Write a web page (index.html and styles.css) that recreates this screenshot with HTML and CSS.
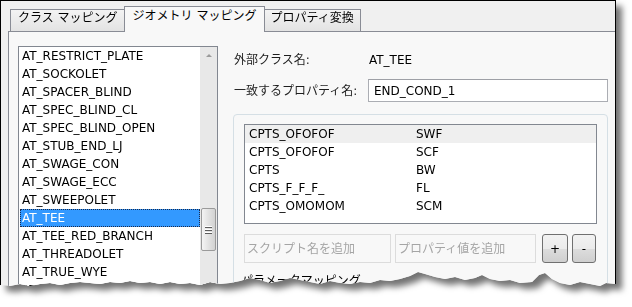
FILE: index.html
```html
<!DOCTYPE html>
<html>
    <head>
        <link rel="stylesheet" href="styles.css">
    </head>
    <body>
        <div class="frame">
        <div class="window">
            <div class="tabs">
                <div class="tab">クラス マッピング</div>
                <div class="tab active">ジオメトリ マッピング</div>
                <div class="tab">プロパティ変換</div>
            </div>
            <div class="panel">
                <div class="classlist">
                    <ul class="items">
                        <li>AT_RESTRICT_PLATE</li>
                        <li>AT_SOCKOLET</li>
                        <li>AT_SPACER_BLIND</li>
                        <li>AT_SPEC_BLIND_CL</li>
                        <li>AT_SPEC_BLIND_OPEN</li>
                        <li>AT_STUB_END_LJ</li>
                        <li>AT_SWAGE_CON</li>
                        <li>AT_SWAGE_ECC</li>
                        <li>AT_SWEEPOLET</li>
                        <li class="selected">AT_TEE</li>
                        <li>AT_TEE_RED_BRANCH</li>
                        <li>AT_THREADOLET</li>
                        <li>AT_TRUE_WYE</li>
                        <li>AT_UNION</li>
                    </ul>
                    <div class="scrollbar">
                        <div class="arrowbox"><span class="arrow"></span></div>
                        <div class="thumb"><i></i><i></i><i></i></div>
                    </div>
                </div>
                <div class="mapping">
                    <div class="fields">
                        <span class="label">外部クラス名:</span>
                        <span class="value">AT_TEE</span>
                        <span class="label">一致するプロパティ名:</span>
                        <input class="field" value="END_COND_1"/>
                    </div>
                    <div class="group">
                        <div class="table">
                            <div class="row hover"><span>CPTS_OFOFOF</span><span>SWF</span></div>
                            <div class="row"><span>CPTS_OFOFOF</span><span>SCF</span></div>
                            <div class="row"><span>CPTS</span><span>BW</span></div>
                            <div class="row"><span>CPTS_F_F_F_</span><span>FL</span></div>
                            <div class="row"><span>CPTS_OMOMOM</span><span>SCM</span></div>
                        </div>
                        <div class="addrow">
                            <input class="add script" placeholder="スクリプト名を追加"/>
                            <input class="add prop" placeholder="プロパティ値を追加"/>
                            <button class="plus">+</button>
                            <button class="minus">-</button>
                        </div>
                        <div class="section">パラメータマッピング</div>
                    </div>
                </div>
            </div>
        </div>
        </div>
    </body>
</html>
```

FILE: styles.css
```css
body{
    margin: 0;
    background: #fff;
    font-family: "DejaVu Sans", "Noto Sans CJK JP", sans-serif;
    font-size: 12px;
    color: #000;
}
.frame{
    width: 616px;
    filter: drop-shadow(6px 6px 3px rgba(0,0,0,0.55));
}
.window{
    width: 616px;
    height: 300px;
    box-sizing: border-box;
    border: 1px solid #000;
    border-bottom: none;
    background: #f0f0f0;
    overflow: hidden;
    clip-path: polygon(0 0, 616px 0, 616px 284px, 606px 283px, 600px 286px, 590px 284px, 580px 282px, 570px 285px, 560px 283px, 552px 279px, 545px 273px, 539px 275px, 532px 282px, 520px 283px, 510px 280px, 500px 281px, 490px 279px, 482px 275px, 475px 278px, 465px 280px, 455px 277px, 445px 279px, 435px 277px, 425px 274px, 418px 272px, 410px 276px, 400px 279px, 390px 281px, 380px 280px, 370px 283px, 360px 282px, 350px 284px, 340px 283px, 330px 281px, 320px 284px, 310px 282px, 300px 280px, 290px 278px, 280px 281px, 270px 283px, 260px 280px, 250px 278px, 240px 281px, 230px 283px, 220px 284px, 210px 282px, 200px 285px, 190px 283px, 180px 284px, 170px 282px, 160px 284px, 150px 282px, 140px 283px, 130px 281px, 120px 283px, 110px 282px, 100px 284px, 90px 283px, 80px 282px, 70px 283px, 60px 285px, 50px 283px, 40px 284px, 30px 286px, 20px 284px, 10px 286px, 0 285px);
}
.tabs{
    display: flex;
    align-items: flex-end;
    height: 30px;
    padding-left: 9px;
}
.tab{
    height: 22px;
    box-sizing: border-box;
    padding: 0 6px 0 7px;
    line-height: 17px;
    border: 1px solid #898c95;
    border-bottom: none;
    background: linear-gradient(#f3f3f3, #e3e3e3);
    white-space: nowrap;
}
.tab + .tab{
    margin-left: -1px;
}
.active{
    height: 26px;
    margin: 0 -2px -1px;
    padding: 0 8px;
    line-height: 19px;
    background: #f8f8f8;
    position: relative;
    z-index: 1;
}
.panel{
    margin-left: 7px;
    height: 300px;
    border-left: 1px solid #898c95;
    border-top: 1px solid #898c95;
    background: #f8f8f8;
    display: flex;
    padding: 14px 0 0 9px;
}
.classlist{
    width: 200px;
    height: 260px;
    box-sizing: border-box;
    border: 1px solid #828790;
    background: #fff;
    display: flex;
}
.items{
    list-style-type: none;
    margin: 0;
    padding: 0 0 0 1px;
    flex: 1;
    overflow: hidden;
}
.items li{
    height: 18px;
    line-height: 18px;
    padding-left: 2px;
    white-space: nowrap;
}
.items .selected{
    background: #3399ff;
    color: #fff;
    outline: 1px dotted #1c2a4a;
    outline-offset: -1px;
}
.scrollbar{
    width: 17px;
    background: #e8e8e8;
    display: flex;
    flex-direction: column;
    align-items: center;
}
.arrowbox{
    height: 17px;
    display: flex;
    align-items: center;
    justify-content: center;
}
.arrow{
    border-left: 3px solid transparent;
    border-right: 3px solid transparent;
    border-bottom: 3px solid #9b9b9b;
}
.thumb{
    margin-top: 144px;
    width: 13px;
    height: 41px;
    border: 1px solid #9a9a9a;
    border-radius: 2px;
    background: linear-gradient(to right, #f4f4f4, #e2e2e2 50%, #d2d2d2);
    display: flex;
    flex-direction: column;
    justify-content: center;
    align-items: center;
    gap: 1px;
}
.thumb i{
    display: block;
    width: 7px;
    height: 1px;
    border-bottom: 1px solid #5c5c5c;
    background: #fff;
}
.mapping{
    margin-left: 15px;
    width: 375px;
    padding-top: 4px;
}
.fields{
    display: grid;
    grid-template-columns: 135px 1fr;
    row-gap: 9px;
    align-items: center;
}
.label{
    padding-left: 1px;
    line-height: 20px;
    color: #1e1e1e;
}
.value{
    padding-left: 1px;
}
.field{
    height: 23px;
    box-sizing: border-box;
    border: 1px solid #abadb3;
    border-top-color: #9ea0a6;
    padding: 0 5px;
    font: inherit;
    background: #fff;
    width: 100%;
}
.group{
    margin-top: 12px;
    border: 1px solid #d5dfe5;
    border-radius: 4px;
    padding: 9px 10px 0;
    height: 200px;
}
.table{
    height: 100px;
    box-sizing: border-box;
    border: 1px solid #828790;
    background: #fff;
}
.row{
    display: grid;
    grid-template-columns: 167px 1fr;
    height: 18px;
    line-height: 18px;
    padding-left: 4px;
}
.hover{
    background: #efefef;
}
.addrow{
    display: flex;
    margin-top: 10px;
}
.add{
    height: 29px;
    box-sizing: border-box;
    border: 1px solid #dcdcdc;
    background: #f8f8f8;
    font: inherit;
    padding: 0 2px;
}
.add::placeholder{
    color: #a5a5a5;
}
.script{
    width: 147px;
    margin-right: 4px;
}
.prop{
    width: 141px;
    margin-right: 6px;
}
button{
    height: 29px;
    border: 1px solid #707070;
    border-radius: 3px;
    background: linear-gradient(#f2f2f2, #ebebeb 50%, #dddddd 50%, #cfcfcf);
    font: inherit;
    padding: 0;
    color: #000;
}
.plus{
    width: 26px;
    margin-right: 4px;
}
.minus{
    width: 24px;
}
.section{
    margin: 10px 0 0 -3px;
    line-height: 16px;
}
```
